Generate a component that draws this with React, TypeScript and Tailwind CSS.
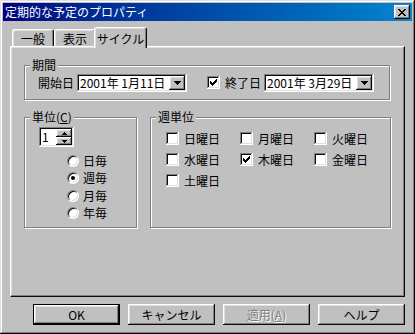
import React from "react";

const raised =
  "shadow-[inset_-1px_-1px_#0a0a0a,inset_1px_1px_#fff,inset_-2px_-2px_#808080,inset_2px_2px_#dfdfdf]";
const sunken =
  "shadow-[inset_-1px_-1px_#fff,inset_1px_1px_#808080,inset_-2px_-2px_#dfdfdf,inset_2px_2px_#0a0a0a]";
const etched = "border border-[#808080] shadow-[inset_1px_1px_#fff,1px_1px_#fff]";

const DownArrow = ({ small }: { small?: boolean }) =>
  small ? (
    <svg width="5" height="3" viewBox="0 0 5 3" shapeRendering="crispEdges">
      <path d="M0 0h5v1H0zM1 1h3v1H1zM2 2h1v1H2z" fill="#000" />
    </svg>
  ) : (
    <svg width="7" height="4" viewBox="0 0 7 4" shapeRendering="crispEdges">
      <path d="M0 0h7v1H0zM1 1h5v1H1zM2 2h3v1H2zM3 3h1v1H3z" fill="#000" />
    </svg>
  );

const UpArrow = () => (
  <svg width="5" height="3" viewBox="0 0 5 3" shapeRendering="crispEdges">
    <path d="M2 0h1v1H2zM1 1h3v1H1zM0 2h5v1H0z" fill="#000" />
  </svg>
);

const CloseGlyph = () => (
  <svg width="8" height="7" viewBox="0 0 8 7" shapeRendering="crispEdges">
    <path
      d="M0 0h2v1H0zM6 0h2v1H6zM1 1h2v1H1zM5 1h2v1H5zM2 2h4v1H2zM3 3h2v1H3zM2 4h4v1H2zM1 5h2v1H1zM5 5h2v1H5zM0 6h2v1H0zM6 6h2v1H6z"
      fill="#000"
    />
  </svg>
);

const DateField = ({ value }: { value: string }) => (
  <div className={`flex h-[18px] w-[110px] items-center bg-white p-[2px] ${sunken}`}>
    <span className="flex-1 pl-[1px] whitespace-pre text-[12px] leading-none">{value}</span>
    <div className={`flex h-full w-[16px] items-center justify-center bg-[#c0c0c0] ${raised}`}>
      <DownArrow />
    </div>
  </div>
);

const Check = ({ checked }: { checked?: boolean }) => (
  <div className={`flex h-[13px] w-[13px] shrink-0 items-center justify-center bg-white ${sunken}`}>
    {checked && (
      <svg width="7" height="7" viewBox="0 0 7 7" shapeRendering="crispEdges">
        <path
          d="M6 0h1v3H6zM5 1h1v3H5zM4 2h1v3H4zM3 3h1v3H3zM2 4h1v3H2zM1 3h1v3H1zM0 2h1v3H0z"
          fill="#000"
        />
      </svg>
    )}
  </div>
);

const Radio = ({ checked }: { checked?: boolean }) => (
  <div className="flex h-[12px] w-[12px] shrink-0 items-center justify-center rounded-full border border-t-[#808080] border-l-[#808080] border-r-white border-b-white bg-white shadow-[inset_1px_1px_#0a0a0a,inset_-1px_-1px_#dfdfdf]">
    {checked && <div className="h-[4px] w-[4px] rounded-full bg-black" />}
  </div>
);

const Tab = ({
  children,
  selected,
  width,
}: {
  children: React.ReactNode;
  selected?: boolean;
  width: string;
}) => (
  <div
    className={`flex items-start justify-center rounded-t-[3px] border-t border-l border-white border-r border-r-[#0a0a0a] bg-[#c0c0c0] shadow-[inset_-1px_0_#808080,inset_1px_1px_#dfdfdf] ${width} ${
      selected ? "relative z-10 -mx-[2px] -mb-[2px] h-[21px] pt-[4px]" : "h-[17px] pt-[2px]"
    }`}
  >
    <span className="text-[12px] leading-[13px]">{children}</span>
  </div>
);

const Group = ({
  label,
  className,
  children,
}: {
  label: React.ReactNode;
  className: string;
  children: React.ReactNode;
}) => (
  <div className={`relative ${etched} ${className}`}>
    <span className="absolute top-[-8px] left-[5px] bg-[#c0c0c0] px-[2px] text-[12px] leading-[14px]">
      {label}
    </span>
    {children}
  </div>
);

const Button = ({
  children,
  primary,
  disabled,
}: {
  children: React.ReactNode;
  primary?: boolean;
  disabled?: boolean;
}) => (
  <div
    className={`flex h-[21px] w-[87px] items-center justify-center bg-[#c0c0c0] ${
      primary ? "border border-black" : ""
    } ${raised}`}
  >
    <span
      className={`text-[12px] leading-none ${
        disabled ? "text-[#808080] [text-shadow:1px_1px_#fff]" : "text-black"
      }`}
    >
      {children}
    </span>
  </div>
);

const days: { label: string; checked?: boolean }[] = [
  { label: "日曜日" },
  { label: "月曜日" },
  { label: "火曜日" },
  { label: "水曜日" },
  { label: "木曜日", checked: true },
  { label: "金曜日" },
  { label: "土曜日" },
];

const units = ["日毎", "週毎", "月毎", "年毎"];

export default function App() {
  return (
    <div className="flex h-[334px] w-[415px] flex-col bg-[#c0c0c0] p-[3px] font-['Noto_Sans_CJK_JP','Noto_Sans',sans-serif] text-[12px] text-black shadow-[inset_-1px_-1px_#0a0a0a,inset_1px_1px_#dfdfdf,inset_-2px_-2px_#808080,inset_2px_2px_#fff]">
      {/* title bar */}
      <div className="flex h-[18px] items-center bg-linear-to-r from-[#000080] to-[#1084d0] pr-[2px] pl-[2px]">
        <span className="flex-1 text-[12px] leading-none text-white">定期的な予定のプロパティ</span>
        <div className={`flex h-[14px] w-[16px] items-center justify-center bg-[#c0c0c0] ${raised}`}>
          <CloseGlyph />
        </div>
      </div>

      {/* tabs + page */}
      <div className="mx-[7px] mt-[6px] flex flex-col">
        <div className="flex h-[19px] items-end pl-[2px]">
          <Tab width="w-[42px]">一般</Tab>
          <Tab width="w-[42px]">表示</Tab>
          <Tab width="w-[53px]" selected>
            サイクル
          </Tab>
        </div>
        <div className="flex h-[251px] flex-col border border-white border-r-[#0a0a0a] border-b-[#0a0a0a] pt-[18px] pl-[13px] shadow-[inset_-1px_-1px_#808080,inset_1px_1px_#dfdfdf]">
          <Group label="期間" className="h-[35px] w-[366px]">
            <div className="flex h-full items-center pl-[13px]">
              <span className="w-[39px] leading-none">開始日</span>
              <DateField value="2001年 1月11日" />
              <div className="ml-[20px]">
                <Check checked />
              </div>
              <span className="ml-[5px] w-[39px] leading-none">終了日</span>
              <DateField value="2001年 3月29日" />
            </div>
          </Group>

          <div className="mt-[17px] flex">
            <Group
              label={
                <>
                  単位(<span className="underline">C</span>)
                </>
              }
              className="h-[111px] w-[113px]"
            >
              <div className="flex flex-col pt-[9px] pl-[14px]">
                <div className={`flex h-[20px] w-[35px] bg-white p-[2px] ${sunken}`}>
                  <span className="flex-1 pl-[1px] text-[12px] leading-[16px]">1</span>
                  <div className="flex w-[16px] flex-col">
                    <div className={`flex flex-1 items-center justify-center bg-[#c0c0c0] ${raised}`}>
                      <UpArrow />
                    </div>
                    <div className={`flex flex-1 items-center justify-center bg-[#c0c0c0] ${raised}`}>
                      <DownArrow small />
                    </div>
                  </div>
                </div>
                <div className="mt-[5px] ml-[28px] flex flex-col">
                  {units.map((u, i) => (
                    <div key={u} className="flex h-[17.5px] items-center">
                      <Radio checked={i === 1} />
                      <span className="ml-[4px] leading-none">{u}</span>
                    </div>
                  ))}
                </div>
              </div>
            </Group>

            <Group label="週単位" className="ml-[13px] h-[111px] w-[241px]">
              <div className="grid grid-cols-[74px_74px_74px] gap-y-[8px] pt-[14px] pl-[15px]">
                {days.map((d) => (
                  <div key={d.label} className="flex h-[13px] items-center">
                    <Check checked={d.checked} />
                    <span className="ml-[5px] leading-none">{d.label}</span>
                  </div>
                ))}
              </div>
            </Group>
          </div>
        </div>
      </div>

      {/* buttons */}
      <div className="mt-[7px] ml-[30px] flex gap-[8px]">
        <Button primary>OK</Button>
        <Button>キャンセル</Button>
        <Button disabled>
          適用(<span className="underline">A</span>)
        </Button>
        <Button>ヘルプ</Button>
      </div>
    </div>
  );
}
